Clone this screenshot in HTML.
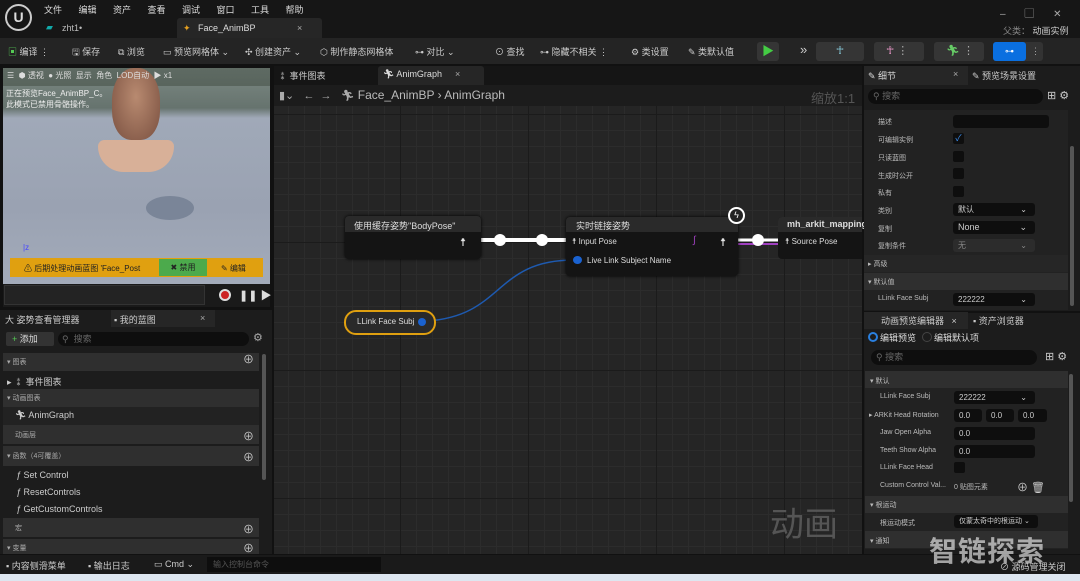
<!DOCTYPE html>
<html><head><meta charset="utf-8"><style>
*{margin:0;padding:0;box-sizing:border-box}
body{width:1080px;height:581px;overflow:hidden;background:#111;font-family:"Liberation Sans","Noto Sans CJK SC",sans-serif;color:#c8c8c8;font-size:9px;position:relative}
.a{position:absolute;white-space:nowrap}
.hd{position:absolute;background:#2f2f2f}
.it{position:absolute;background:#1c1c1c}
.box{position:absolute;background:#0e0e0e;border-radius:3px;height:13px;color:#ccc;font-size:8px;padding-left:5px;line-height:13px}
.cb{position:absolute;width:11px;height:11px;background:#0e0e0e;border-radius:2px}
.lbl{position:absolute;font-size:7px;color:#bbb}
.btn{position:absolute;background:#353535;border-radius:3px;height:19px;top:42px}
</style></head><body>
<div class="a" style="left:0;top:0;width:1080px;height:38px;background:#161616"></div>
<div class="a" style="left:5px;top:4px;width:27px;height:27px;border-radius:50%;border:2px solid #ccc;color:#ddd;font-size:14px;text-align:center;line-height:23px;font-weight:bold">U</div>
<div class="a" style="left:44px;top:3px;color:#ddd;word-spacing:14px">文件 编辑 资产 查看 调试 窗口 工具 帮助</div>
<div class="a" style="left:46px;top:22px;color:#1aa">▰</div>
<div class="a" style="left:62px;top:23px;color:#bbb">zht1•</div>
<div class="a" style="left:177px;top:18px;width:145px;height:20px;background:#262626;border-radius:3px 3px 0 0"></div>
<div class="a" style="left:183px;top:23px;color:#e5a020">✦</div>
<div class="a" style="left:198px;top:23px;color:#ddd">Face_AnimBP</div>
<div class="a" style="left:297px;top:23px;color:#aaa">×</div>
<div class="a" style="left:1000px;top:5px;color:#aaa;font-size:10px;word-spacing:16px">– ▢ ✕</div>
<div class="a" style="left:1003px;top:24px;color:#888">父类： <span style="color:#ccc">动画实例</span></div>
<div class="a" style="left:0;top:38px;width:1080px;height:26px;background:#242424"></div>
<div class="a" style="left:8px;top:45px;color:#ccc"><span style="color:#5c5">▣</span> 编译 ⋮</div>
<div class="a" style="left:72px;top:45px;color:#ccc">🖫 保存</div>
<div class="a" style="left:118px;top:45px;color:#ccc">⧉ 浏览</div>
<div class="a" style="left:163px;top:45px;color:#ccc">▭ 预览网格体 ⌄</div>
<div class="a" style="left:245px;top:45px;color:#ccc">✣ 创建资产 ⌄</div>
<div class="a" style="left:320px;top:45px;color:#ccc">⬡ 制作静态网格体</div>
<div class="a" style="left:415px;top:45px;color:#ccc">⊶ 对比 ⌄</div>
<div class="a" style="left:495px;top:45px;color:#ccc">⊙ 查找</div>
<div class="a" style="left:540px;top:45px;color:#ccc">⊶ 隐藏不相关 ⋮</div>
<div class="a" style="left:631px;top:45px;color:#ccc">⚙ 类设置</div>
<div class="a" style="left:688px;top:45px;color:#ccc">✎ 类默认值</div>
<div class="btn" style="left:757px;width:22px;color:#4c4;font-size:12px;text-align:center;line-height:19px">▶</div>
<div class="a" style="left:800px;top:42px;color:#ccc;font-size:13px">»</div>
<div class="btn" style="left:816px;width:48px;color:#8cd;text-align:center;line-height:19px;font-size:11px">☥</div>
<div class="btn" style="left:874px;width:50px;color:#e9c;line-height:19px;font-size:11px;padding-left:12px">☥ <span style="color:#aaa">⋮</span></div>
<div class="btn" style="left:934px;width:50px;color:#6c6;line-height:19px;font-size:11px;padding-left:12px">🏃︎ <span style="color:#aaa">⋮</span></div>
<div class="btn" style="left:993px;width:50px;background:#333"></div>
<div class="a" style="left:993px;top:42px;width:33px;height:19px;background:#0a6fe0;border-radius:3px;color:#fff;text-align:center;line-height:19px">⊶</div>
<div class="a" style="left:1031px;top:46px;color:#aaa">⋮</div>

<div class="a" style="left:3px;top:68px;width:267px;height:216px;background:linear-gradient(#7d8a84 0,#66736e 40px,#a0a9b8 50px,#9aa2b2 140px,#a3abba 216px)"></div>
<div class="a" style="left:3px;top:68px;width:267px;height:18px;background:rgba(50,60,50,.4)"></div>
<div class="a" style="left:112px;top:68px;width:48px;height:72px;background:radial-gradient(ellipse at 50% 40%,#b88a70,#7a5040);border-radius:45% 45% 40% 40%"></div>
<div class="a" style="left:98px;top:140px;width:76px;height:32px;background:#d8b098;border-radius:10px 10px 40px 40px"></div>
<div class="a" style="left:146px;top:196px;width:48px;height:24px;background:#7a8598;border-radius:50%"></div>
<div class="a" style="left:7px;top:70px;color:#ddd;font-size:8px">☰ &nbsp;⬢ 透视 &nbsp;● 光照 &nbsp;显示 &nbsp;角色 &nbsp;LOD自动 &nbsp;▶ x1</div>
<div class="a" style="left:6px;top:88px;color:#eee;font-size:8px;line-height:11px">正在预览Face_AnimBP_C。<br>此模式已禁用骨骼操作。</div>
<div class="a" style="left:23px;top:243px;color:#44f;font-size:8px">|z</div>
<div class="a" style="left:10px;top:258px;width:253px;height:19px;background:#e0a010"></div>
<div class="a" style="left:24px;top:263px;color:#222;font-size:8px">⚠ 后期处理动画蓝图 'Face_Post</div>
<div class="a" style="left:159px;top:259px;width:48px;height:17px;background:#4caa4c;color:#222;font-size:8px;text-align:center;line-height:17px">✖ 禁用</div>
<div class="a" style="left:221px;top:263px;color:#222;font-size:8px">✎ 编辑</div>
<div class="a" style="left:3px;top:284px;width:267px;height:23px;background:#1a1a1a"></div>
<div class="a" style="left:4px;top:285px;width:201px;height:20px;background:#232323;border:1px solid #333"></div>
<div class="a" style="left:219px;top:289px;width:12px;height:12px;border-radius:50%;border:2px solid #ddd;background:#c22"></div>
<div class="a" style="left:239px;top:287px;color:#ddd;font-size:11px">❚❚ ▶</div>

<div class="a" style="left:0;top:310px;width:272px;height:244px;background:#1c1c1c"></div>
<div class="a" style="left:5px;top:313px;color:#ccc">大 姿势查看管理器</div>
<div class="a" style="left:111px;top:310px;width:104px;height:17px;background:#262626"></div>
<div class="a" style="left:114px;top:313px;color:#ccc">▪ 我的蓝图</div>
<div class="a" style="left:200px;top:313px;color:#aaa">×</div>
<div class="a" style="left:6px;top:332px;width:48px;height:14px;background:#333;border-radius:2px;color:#ddd;padding-left:6px;line-height:14px"><span style="color:#5c5">+</span> 添加</div>
<div class="a" style="left:58px;top:332px;width:191px;height:14px;background:#0e0e0e;border-radius:7px;color:#666;padding-left:4px;line-height:14px">⚲ &nbsp;搜索</div>
<div class="a" style="left:253px;top:331px;color:#aaa;font-size:11px">⚙</div>
<div class="hd" style="left:3px;top:353px;width:256px;height:18px"></div>
<div class="a" style="left:7px;top:357px;color:#aaa;font-size:7px">▾ 图表</div>
<div class="a" style="left:7px;top:375px;color:#ccc">▸ ⁑ 事件图表</div>
<div class="hd" style="left:3px;top:389px;width:256px;height:18px"></div>
<div class="a" style="left:7px;top:393px;color:#aaa;font-size:7px">▾ 动画图表</div>
<div class="it" style="left:3px;top:407px;width:256px;height:18px;background:#222"></div>
<div class="a" style="left:15px;top:410px;color:#ccc">🏃︎ AnimGraph</div>
<div class="hd" style="left:3px;top:425px;width:256px;height:19px"></div>
<div class="a" style="left:15px;top:430px;color:#aaa;font-size:7px">动画层</div>
<div class="hd" style="left:3px;top:446px;width:256px;height:20px"></div>
<div class="a" style="left:7px;top:451px;color:#aaa;font-size:7px">▾ 函数（4可覆盖）</div>
<div class="a" style="left:16px;top:470px;color:#ccc"><i>ƒ</i> Set Control</div>
<div class="a" style="left:16px;top:487px;color:#ccc"><i>ƒ</i> ResetControls</div>
<div class="a" style="left:16px;top:504px;color:#ccc"><i>ƒ</i> GetCustomControls</div>
<div class="hd" style="left:3px;top:518px;width:256px;height:19px"></div>
<div class="a" style="left:15px;top:523px;color:#aaa;font-size:7px">宏</div>
<div class="hd" style="left:3px;top:539px;width:256px;height:15px"></div>
<div class="a" style="left:7px;top:543px;color:#aaa;font-size:7px">▾ 变量</div>
<div class="a" style="left:243px;top:355px;color:#ccc;font-size:11px;line-height:11px">⊕</div>
<div class="a" style="left:243px;top:428px;color:#ccc;font-size:11px">⊕</div>
<div class="a" style="left:243px;top:449px;color:#ccc;font-size:11px">⊕</div>
<div class="a" style="left:243px;top:521px;color:#ccc;font-size:11px">⊕</div>
<div class="a" style="left:243px;top:540px;color:#ccc;font-size:11px">⊕</div>
<div class="a" style="left:262px;top:354px;width:4px;height:126px;background:#555;border-radius:2px"></div>

<div class="a" style="left:274px;top:66px;width:588px;height:19px;background:#151515"></div>
<div class="a" style="left:278px;top:69px;color:#ccc">⁑ 事件图表</div>
<div class="a" style="left:378px;top:66px;width:106px;height:19px;background:#262626;border-radius:3px 3px 0 0"></div>
<div class="a" style="left:383px;top:69px;color:#ddd">🏃︎ AnimGraph</div>
<div class="a" style="left:455px;top:69px;color:#aaa">×</div>
<div class="a" style="left:274px;top:85px;width:588px;height:21px;background:#1c1c1c"></div>
<div class="a" style="left:279px;top:88px;color:#aaa;font-size:11px">▮⌄ &nbsp;&nbsp;← &nbsp;→ &nbsp;&nbsp;🏃︎ <span style="color:#bbb;font-size:12px">Face_AnimBP › AnimGraph</span></div>
<div class="a" style="left:811px;top:88px;color:#555;font-size:13px">缩放1:1</div>
<div class="a" style="left:274px;top:106px;width:588px;height:448px;background-color:#252525;background-image:linear-gradient(#1b1b1b 1px,transparent 1px),linear-gradient(90deg,#1b1b1b 1px,transparent 1px),linear-gradient(#2c2c2c 1px,transparent 1px),linear-gradient(90deg,#2c2c2c 1px,transparent 1px);background-size:128px 128px,128px 128px,16px 16px,16px 16px;background-position:-2px 8px"></div>
<div class="a" style="left:770px;top:497px;color:#555;font-size:34px">动画</div>
<svg class="a" style="left:274px;top:106px" width="588" height="448">
<path d="M162 134 L300 134" stroke="#fff" stroke-width="4"/>
<circle cx="226" cy="134" r="6" fill="#fff"/><circle cx="268" cy="134" r="6" fill="#fff"/>
<path d="M460 134 L504 134" stroke="#fff" stroke-width="3"/>
<path d="M460 138 L504 138" stroke="#a040c0" stroke-width="2"/>
<circle cx="484" cy="134" r="6" fill="#fff"/>
<path d="M153 215 C230 210 220 154 300 154" stroke="#1e5ab0" stroke-width="1.5" fill="none"/>
</svg>
<div class="a" style="left:345px;top:216px;width:136px;height:43px;background:#141414;border-radius:4px;box-shadow:0 0 3px #000"></div>
<div class="a" style="left:345px;top:216px;width:136px;height:16px;background:#2a2a2a;border-radius:4px 4px 0 0"></div>
<div class="a" style="left:354px;top:219px;color:#ddd">使用缓存姿势"BodyPose"</div>
<div class="a" style="left:460px;top:236px;color:#fff;font-size:11px">☨</div>
<div class="a" style="left:566px;top:217px;width:172px;height:59px;background:#141414;border-radius:4px;box-shadow:0 0 3px #000"></div>
<div class="a" style="left:566px;top:217px;width:172px;height:15px;background:#2a2a2a;border-radius:4px 4px 0 0"></div>
<div class="a" style="left:576px;top:219px;color:#ddd">实时链接姿势</div>
<div class="a" style="left:728px;top:207px;width:17px;height:17px;border-radius:50%;border:2px solid #fff;background:#222;color:#fff;font-size:9px;text-align:center;line-height:13px">ϟ</div>
<div class="a" style="left:572px;top:237px;color:#ddd;font-size:8px"><span style="color:#fff">☨</span> Input Pose</div>
<div class="a" style="left:693px;top:235px;color:#a040c0;font-size:10px">∫</div>
<div class="a" style="left:720px;top:236px;color:#fff;font-size:11px">☨</div>
<div class="a" style="left:573px;top:256px;width:9px;height:8px;border-radius:50%;background:#1a62d0"></div>
<div class="a" style="left:587px;top:256px;color:#ddd;font-size:8px">Live Link Subject Name</div>
<div class="a" style="left:778px;top:217px;width:84px;height:42px;background:#141414;border-radius:4px 0 0 4px"></div>
<div class="a" style="left:778px;top:217px;width:84px;height:15px;background:#2a2a2a;border-radius:4px 0 0 0"></div>
<div class="a" style="left:787px;top:219px;color:#ddd;font-weight:bold">mh_arkit_mapping</div>
<div class="a" style="left:785px;top:237px;color:#ddd;font-size:8px"><span style="color:#fff">☨</span> Source Pose</div>
<div class="a" style="left:344px;top:310px;width:92px;height:25px;border:2px solid #e0a010;border-radius:12px;background:#2a2a2a"></div>
<div class="a" style="left:357px;top:317px;color:#ddd;font-size:8px">LLink Face Subj</div>
<div class="a" style="left:418px;top:318px;width:8px;height:8px;border-radius:50%;background:#1a62d0"></div>

<div class="a" style="left:864px;top:66px;width:216px;height:488px;background:#1c1c1c"></div>
<div class="a" style="left:864px;top:66px;width:104px;height:19px;background:#262626"></div>
<div class="a" style="left:868px;top:69px;color:#ddd">✎ 细节</div>
<div class="a" style="left:953px;top:69px;color:#aaa">×</div>
<div class="a" style="left:972px;top:69px;color:#ccc">✎ 预览场景设置</div>
<div class="a" style="left:868px;top:89px;width:175px;height:15px;background:#0e0e0e;border-radius:8px;color:#666;padding-left:5px;line-height:15px">⚲ 搜索</div>
<div class="a" style="left:1047px;top:89px;color:#ccc;font-size:11px">⊞ ⚙</div>
<div class="a" style="left:864px;top:110px;width:204px;height:200px;background:#222"></div>
<div class="lbl" style="left:878px;top:117px">描述</div><div class="box" style="left:953px;top:115px;width:96px"></div>
<div class="lbl" style="left:878px;top:135px">可编辑实例</div><div class="cb" style="left:953px;top:133px;color:#3a8ef0;font-size:9px;line-height:11px;text-align:center">✓</div>
<div class="lbl" style="left:878px;top:153px">只读蓝图</div><div class="cb" style="left:953px;top:151px"></div>
<div class="lbl" style="left:878px;top:171px">生成时公开</div><div class="cb" style="left:953px;top:168px"></div>
<div class="lbl" style="left:878px;top:188px">私有</div><div class="cb" style="left:953px;top:186px"></div>
<div class="lbl" style="left:878px;top:206px">类别</div><div class="box" style="left:953px;top:203px;width:82px">默认 <span style="float:right;margin-right:8px">⌄</span></div>
<div class="lbl" style="left:878px;top:224px">复制</div><div class="box" style="left:953px;top:221px;width:82px;font-size:9px">None<span style="float:right;margin-right:8px">⌄</span></div>
<div class="lbl" style="left:878px;top:241px">复制条件</div><div class="box" style="left:953px;top:239px;width:82px;background:#2c2c2c;color:#888">无<span style="float:right;margin-right:8px">⌄</span></div>
<div class="hd" style="left:864px;top:255px;width:204px;height:17px;background:#262626"></div>
<div class="lbl" style="left:868px;top:259px">▸ 高级</div>
<div class="hd" style="left:864px;top:273px;width:204px;height:17px"></div>
<div class="lbl" style="left:868px;top:277px">▾ 默认值</div>
<div class="lbl" style="left:878px;top:295px">LLink Face Subj</div><div class="box" style="left:953px;top:293px;width:82px">222222<span style="float:right;margin-right:8px">⌄</span></div>
<div class="a" style="left:1070px;top:146px;width:4px;height:160px;background:#555;border-radius:2px"></div>
<div class="a" style="left:864px;top:311px;width:216px;height:2px;background:#111"></div>
<div class="a" style="left:864px;top:312px;width:104px;height:17px;background:#262626"></div>
<div class="a" style="left:881px;top:314px;color:#ccc">动画预览编辑器 &nbsp;&nbsp;×</div>
<div class="a" style="left:973px;top:314px;color:#ccc">▪ 资产浏览器</div>
<div class="a" style="left:868px;top:332px;width:10px;height:10px;border-radius:50%;border:2px solid #2a80e0"></div>
<div class="a" style="left:880px;top:331px;color:#ddd">编辑预览</div>
<div class="a" style="left:922px;top:332px;width:10px;height:10px;border-radius:50%;border:1px solid #444"></div>
<div class="a" style="left:934px;top:331px;color:#ddd">编辑默认项</div>
<div class="a" style="left:871px;top:350px;width:166px;height:15px;background:#0e0e0e;border-radius:8px;color:#666;padding-left:5px;line-height:15px">⚲ 搜索</div>
<div class="a" style="left:1045px;top:350px;color:#ccc;font-size:11px">⊞ ⚙</div>
<div class="a" style="left:865px;top:371px;width:203px;height:178px;background:#222"></div>
<div class="hd" style="left:865px;top:371px;width:203px;height:17px"></div>
<div class="lbl" style="left:870px;top:376px">▾ 默认</div>
<div class="lbl" style="left:880px;top:393px">LLink Face Subj</div><div class="box" style="left:954px;top:391px;width:81px">222222<span style="float:right;margin-right:8px">⌄</span></div>
<div class="lbl" style="left:869px;top:411px">▸ ARKit Head Rotation</div>
<div class="box" style="left:954px;top:409px;width:28px">0.0</div><div class="box" style="left:986px;top:409px;width:28px">0.0</div><div class="box" style="left:1018px;top:409px;width:29px">0.0</div>
<div class="lbl" style="left:880px;top:429px">Jaw Open Alpha</div><div class="box" style="left:954px;top:427px;width:81px">0.0</div>
<div class="lbl" style="left:880px;top:447px">Teeth Show Alpha</div><div class="box" style="left:954px;top:445px;width:81px">0.0</div>
<div class="lbl" style="left:880px;top:464px">LLink Face Head</div><div class="cb" style="left:954px;top:462px"></div>
<div class="lbl" style="left:880px;top:482px">Custom Control Val...</div><div class="lbl" style="left:954px;top:482px">0 贴图元素</div>
<div class="a" style="left:1017px;top:479px;color:#ccc;font-size:11px">⊕ 🗑︎</div>
<div class="hd" style="left:865px;top:496px;width:203px;height:17px"></div>
<div class="lbl" style="left:870px;top:500px">▾ 根运动</div>
<div class="lbl" style="left:880px;top:518px">根运动模式</div><div class="box" style="left:954px;top:515px;width:84px;font-size:7px">仅蒙太奇中的根运动 ⌄</div>
<div class="hd" style="left:865px;top:531px;width:203px;height:17px"></div>
<div class="lbl" style="left:870px;top:536px">▾ 通知</div>
<div class="a" style="left:1069px;top:374px;width:4px;height:128px;background:#555;border-radius:2px"></div>

<div class="a" style="left:0;top:555px;width:1080px;height:19px;background:#1a1a1a"></div>
<div class="a" style="left:6px;top:559px;color:#ccc">▪ 内容侧滑菜单</div>
<div class="a" style="left:88px;top:559px;color:#ccc">▪ 输出日志</div>
<div class="a" style="left:154px;top:559px;color:#ccc">▭ Cmd ⌄</div>
<div class="a" style="left:207px;top:557px;width:174px;height:15px;background:#0e0e0e;color:#555;padding-left:6px;line-height:15px;font-size:8px">输入控制台命令</div>
<div class="a" style="left:1000px;top:560px;color:#ccc">⊘ 源码管理关闭</div>
<div class="a" style="left:0;top:574px;width:1080px;height:7px;background:#dde6f0"></div>
<div class="a" style="left:929px;top:530px;color:rgba(255,255,255,.6);font-size:28px;font-weight:bold;letter-spacing:1px">智链探索</div>
</body></html>
